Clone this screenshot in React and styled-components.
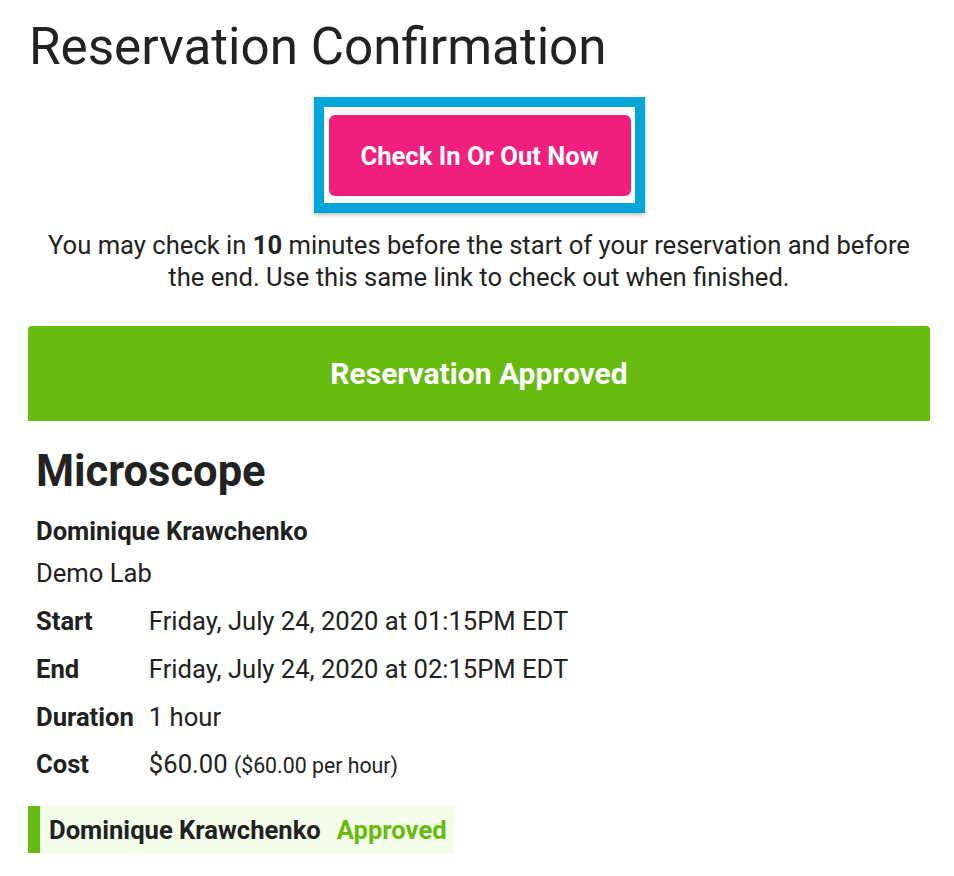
import React from "react";
import styled, { createGlobalStyle } from "styled-components";

const Global = createGlobalStyle`
  html, body { margin: 0; padding: 0; background: #fff; }
  body { font-family: Roboto, "Liberation Sans", Arial, sans-serif; color: #212121; }
`;

const Page = styled.div`
  width: 902px;
  padding: 0 24px 0 28px;
`;

const Title = styled.h1`
  margin: 0;
  padding: 17px 0 0 1px;
  font-size: 51.2px;
  font-weight: 400;
  line-height: 60px;
  color: #222;
`;

const ButtonWrap = styled.div`
  display: flex;
  justify-content: center;
  margin-top: 20px;
`;

const Highlight = styled.div`
  border: 10px solid #00a5d9;
  padding: 8px 4px 7px 5px;
  background: #fff;
  box-shadow: 0 2px 4px rgba(0, 0, 0, 0.25);
`;

const CheckButton = styled.button`
  width: 302px;
  height: 81px;
  border: none;
  border-radius: 6px;
  background: #f01f7e;
  color: #fff;
  font-family: Roboto, "Liberation Sans", Arial, sans-serif;
  font-size: 25.6px;
  font-weight: 700;
  display: block;
  padding: 0;
`;

const Note = styled.p`
  margin: 16px 0 0;
  text-align: center;
  font-size: 25.6px;
  line-height: 32px;
  color: #222;
`;

const Banner = styled.div`
  margin-top: 33px;
  height: 95px;
  background: #67ba0f;
  border-radius: 4px 4px 0 0;
  display: flex;
  align-items: center;
  justify-content: center;
  color: #fff;
  font-size: 30px;
  font-weight: 700;
`;

const Details = styled.div`
  padding: 0 0 0 8px;
`;

const Item = styled.h2`
  margin: 26px 0 0;
  font-size: 43.5px;
  font-weight: 700;
  line-height: 50px;
  color: #222;
`;

const Person = styled.div`
  margin-top: 18px;
  font-size: 25.6px;
  font-weight: 700;
  line-height: 32px;
`;

const Lab = styled.div`
  margin-top: 10px;
  font-size: 25.6px;
  line-height: 32px;
`;

const Rows = styled.div`
  margin-top: 16px;
  display: grid;
  grid-template-columns: max-content 1fr;
  column-gap: 15px;
  row-gap: 15.8px;
  font-size: 25.6px;
  line-height: 32px;
`;

const Label = styled.div`
  font-weight: 700;
`;

const Value = styled.div`
  color: #222;
`;

const Small = styled.span`
  font-size: 21.3px;
`;

const Approval = styled.div`
  margin-top: 24px;
  display: inline-flex;
  align-items: center;
  gap: 16px;
  height: 47px;
  padding: 0 7px 0 9px;
  background: #f3fde9;
  border-left: 12px solid #67ba0f;
  font-size: 25.6px;
  font-weight: 700;
`;

const Status = styled.span`
  color: #67ba0f;
`;

export default function App() {
  const rows = [
    ["Start", "Friday, July 24, 2020 at 01:15PM EDT"],
    ["End", "Friday, July 24, 2020 at 02:15PM EDT"],
    ["Duration", "1 hour"],
  ];
  return (
    <>
      <Global />
      <Page>
        <Title>Reservation Confirmation</Title>
        <ButtonWrap>
          <Highlight>
            <CheckButton>Check In Or Out Now</CheckButton>
          </Highlight>
        </ButtonWrap>
        <Note>
          You may check in <b>10</b> minutes before the start of your reservation and before
          <br />
          the end. Use this same link to check out when finished.
        </Note>
        <Banner>Reservation Approved</Banner>
        <Details>
          <Item>Microscope</Item>
          <Person>Dominique Krawchenko</Person>
          <Lab>Demo Lab</Lab>
          <Rows>
            {rows.map(([l, v]) => (
              <React.Fragment key={l}>
                <Label>{l}</Label>
                <Value>{v}</Value>
              </React.Fragment>
            ))}
            <Label>Cost</Label>
            <Value>
              $60.00 <Small>($60.00 per hour)</Small>
            </Value>
          </Rows>
        </Details>
        <Approval>
          <span>Dominique Krawchenko</span>
          <Status>Approved</Status>
        </Approval>
      </Page>
    </>
  );
}
